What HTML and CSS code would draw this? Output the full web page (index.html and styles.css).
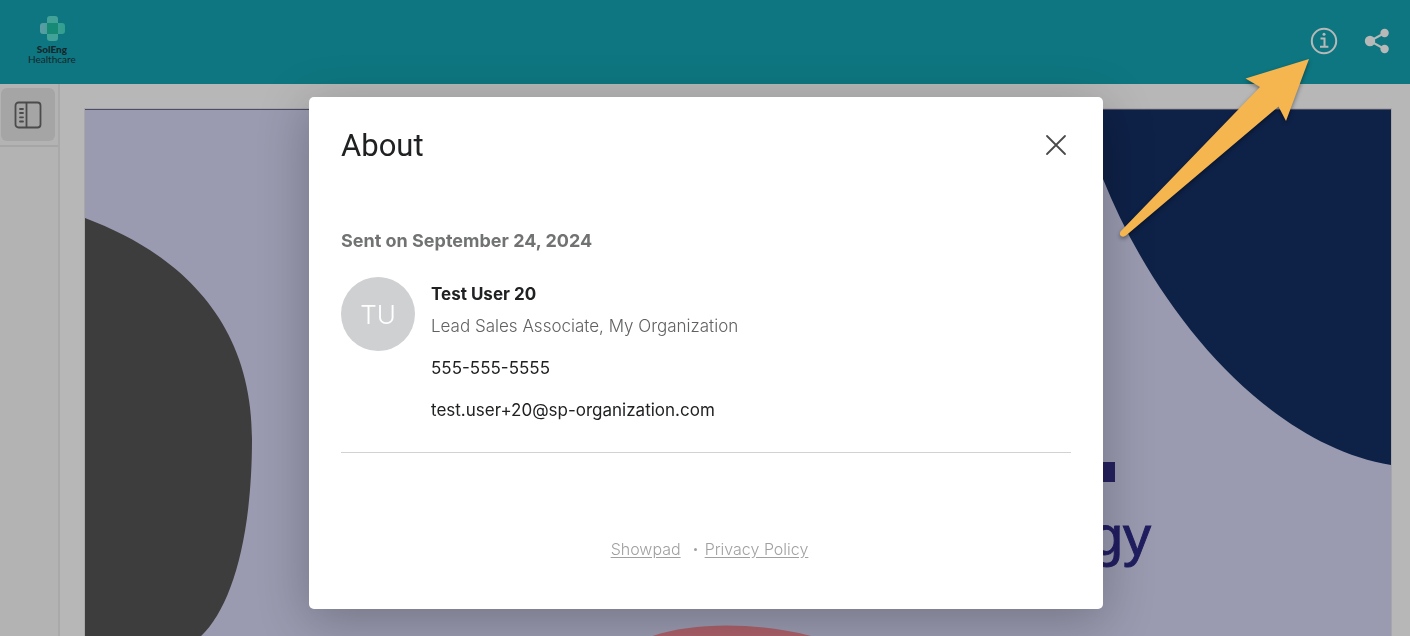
FILE: index.html
```html
<!DOCTYPE html>
<html lang="en">
<head>
  <meta charset="UTF-8">
  <meta name="viewport" content="width=device-width, initial-scale=1.0">
  <title>SolEng Healthcare</title>
  <link rel="stylesheet" href="styles.css">
</head>
<body>
  <header class="topbar">
    <a class="logo" href="#">
      <svg width="26" height="26" viewBox="0 0 26 26" aria-hidden="true">
        <defs>
          <linearGradient id="cross" x1="0" x2="1" y1="0" y2="0">
            <stop offset="0" stop-color="#5b9da4"/>
            <stop offset="1" stop-color="#2f9f8d"/>
          </linearGradient>
        </defs>
        <rect x="8" y="1" width="11" height="25" rx="3" fill="#43a298"/>
        <rect x="1" y="8" width="25" height="11" rx="3" fill="url(#cross)"/>
        <rect x="8" y="8" width="11" height="11" fill="#178a76"/>
      </svg>
      <span class="logo-name">SolEng</span>
      <span class="logo-sub">Healthcare</span>
    </a>
    <div class="topbar-actions">
      <button class="icon-btn" aria-label="About">
        <svg width="28" height="28" viewBox="0 0 28 28" fill="none" stroke="#b7b9b9" stroke-width="2">
          <circle cx="14" cy="14" r="12.2"/>
          <path d="M10.5 11.500h4v8M10 19.800h8.400"/>
          <circle cx="14" cy="7.300" r="1.500" fill="#b7b9b9" stroke="none"/>
        </svg>
      </button>
      <button class="icon-btn" aria-label="Share">
        <svg width="28" height="28" viewBox="0 0 28 28" fill="#b7b9b9">
          <path d="M21.500 6L7 14l14.500 8" fill="none" stroke="#b7b9b9" stroke-width="2"/>
          <circle cx="7" cy="14" r="5.200"/>
          <circle cx="21.600" cy="6" r="4.200"/>
          <circle cx="21.600" cy="22" r="4.200"/>
        </svg>
      </button>
    </div>
  </header>

  <div class="viewer">
    <aside class="sidebar">
      <div class="sidebar-top">
        <button class="panel-btn" aria-label="Toggle pages">
          <svg width="28" height="28" viewBox="0 0 28 28" fill="none" stroke="#4b4b4b" stroke-width="1.800">
            <rect x="1.500" y="1.500" width="25" height="25" rx="3"/>
            <path d="M12.500 1.500v25"/>
            <path d="M6 8h3M6 12h3M6 16.300h3M6 20.500h3" stroke-linecap="round"/>
          </svg>
        </button>
      </div>
    </aside>
    <main class="stage">
      <svg class="slide" viewBox="0 0 1306 735" aria-hidden="true">
        <rect width="1306" height="735" fill="#9a9ab0"/>
        <path d="M0 109C96 145 167 213 167 330C167 430 146 500 115 528C80 570 30 600 0 610Z" fill="#3d3d3d"/>
        <path d="M1000 0C1005 30 1009 50 1018 70C1070 200 1180 335 1306 356V0Z" fill="#0e2147"/>
        <path d="M535 545C575 507 700 507 775 545Z" fill="#ab6069"/>
        <path d="M0 0H1306" stroke="#4c4d69" stroke-width="2"/>
        <rect x="1010" y="353" width="20" height="20" fill="#25215f"/>
        <text class="slide-title" x="1066" y="446" text-anchor="end">gy</text>
      </svg>
    </main>
  </div>

  <div class="overlay">
    <section class="modal" role="dialog" aria-labelledby="about-title">
      <div class="modal-head">
        <h1 id="about-title">About</h1>
        <button class="close-btn" aria-label="Close">
          <svg width="22" height="22" viewBox="0 0 22 22" stroke="#4a4a4a" stroke-width="1.800" stroke-linecap="round">
            <path d="M2 2l18 18M20 2L2 20"/>
          </svg>
        </button>
      </div>
      <h2>Sent on September 24, 2024</h2>
      <div class="contact">
        <div class="avatar">TU</div>
        <div class="details">
          <p class="name">Test User 20</p>
          <p class="role">Lead Sales Associate, My Organization</p>
          <p class="line">555-555-5555</p>
          <p class="line">test.user+20@sp-organization.com</p>
        </div>
      </div>
      <footer class="modal-foot">
        <a href="#">Showpad</a>
        <span class="dot"></span>
        <a href="#">Privacy Policy</a>
      </footer>
    </section>
  </div>

  <!-- callout pointing at the info button -->
  <svg class="arrow" width="210" height="200" viewBox="0 0 210 200" aria-hidden="true">
    <path d="M200 9L136.500 28.500L151 37L11.500 181.500Q10 184.500 12 186Q14.500 187.500 17 185.500L169.500 56.500L177 71Z" fill="#f5b54f"/>
  </svg>
</body>
</html>
```
FILE: styles.css
```css
* {
  box-sizing: border-box;
}

body {
  margin: 0;
  height: 100vh;
  display: flex;
  flex-direction: column;
  overflow: hidden;
  font-family: Inter, "Liberation Sans", sans-serif;
  background: #b7b7b7;
  color: #202122;
}

h1, h2, p {
  margin: 0;
}

button {
  padding: 0;
  border: none;
  background: none;
  cursor: pointer;
}

svg {
  display: block;
}

.topbar {
  flex: none;
  height: 84px;
  padding: 0 19px 2px 28px;
  display: flex;
  justify-content: space-between;
  align-items: center;
  background: #0e7680;
}

.logo {
  display: flex;
  flex-direction: column;
  align-items: center;
  padding-bottom: 4px;
  font-family: Lato, sans-serif;
  font-size: 10px;
  line-height: 10px;
  color: #14262b;
  text-decoration: none;
}

.logo svg {
  margin-bottom: 3px;
}

.logo-name {
  font-weight: 900;
}

.topbar-actions {
  display: flex;
  gap: 25px;
}

.viewer {
  flex: 1;
  display: flex;
  min-height: 0;
  overflow: hidden;
}

.sidebar {
  flex: none;
  width: 60px;
  border-right: 2px solid #a9a9a9;
  background: #b3b3b3;
}

.sidebar-top {
  padding: 4px 1px;
  border-bottom: 2px solid #a6a6a6;
}

.panel-btn {
  width: 54px;
  height: 53px;
  display: flex;
  justify-content: center;
  align-items: center;
  border-radius: 6px;
  background: #a5a5a5;
}

.stage {
  flex: 1;
  padding: 24px 18px 0 24px;
}

.slide {
  width: 100%;
  border: 1px solid #a7a7a7;
}

.slide-title {
  font-family: "Liberation Sans", sans-serif;
  font-size: 56px;
  fill: #211e60;
  stroke: #211e60;
  stroke-width: 1px;
}

.overlay {
  position: fixed;
  inset: 0;
  display: flex;
  justify-content: center;
  align-items: flex-start;
  padding: 97px 16px 0 18px;
}

.modal {
  width: 100%;
  max-width: 794px;
  padding: 32px 32px 48px;
  border-radius: 5px;
  background: #fff;
  box-shadow: 0 10px 50px rgba(0, 0, 0, 0.25);
}

.modal-head {
  display: flex;
  justify-content: space-between;
  align-items: center;
  height: 32px;
  margin-bottom: 67px;
}

h1 {
  font-family: Roboto, sans-serif;
  font-size: 31px;
  font-weight: 400;
  line-height: 32px;
  padding-top: 2px;
}

.close-btn {
  margin-right: 4px;
}

h2 {
  font-size: 18px;
  font-weight: 700;
  line-height: 26px;
  color: #717272;
}

.contact {
  display: flex;
  gap: 16px;
  padding: 23px 0 26px;
  border-bottom: 1px solid #d2d2d2;
}

.avatar {
  flex: none;
  width: 74px;
  height: 74px;
  display: flex;
  justify-content: center;
  align-items: center;
  border-radius: 50%;
  background: #cfd0d2;
  color: #fff;
  font-size: 26px;
  font-weight: 300;
}

.details {
  padding-top: 1px;
  font-size: 17px;
  line-height: 32px;
}

.name {
  font-weight: 700;
}

.role {
  font-weight: 300;
  color: #606161;
}

.line {
  margin-top: 10px;
}

.modal-foot {
  display: flex;
  justify-content: center;
  align-items: center;
  gap: 8px;
  margin-top: 84px;
  padding-left: 7px;
  font-size: 16px;
  font-weight: 300;
  line-height: 24px;
}

.modal-foot a {
  color: #a0a0a0;
  text-underline-offset: 2px;
}

.dot {
  width: 3px;
  height: 3px;
  margin-left: 5px;
  border-radius: 50%;
  background: #a0a0a0;
}

.arrow {
  position: absolute;
  top: 50px;
  right: 91px;
  filter: drop-shadow(0 2px 2px rgba(0, 0, 0, 0.4));
}
```
